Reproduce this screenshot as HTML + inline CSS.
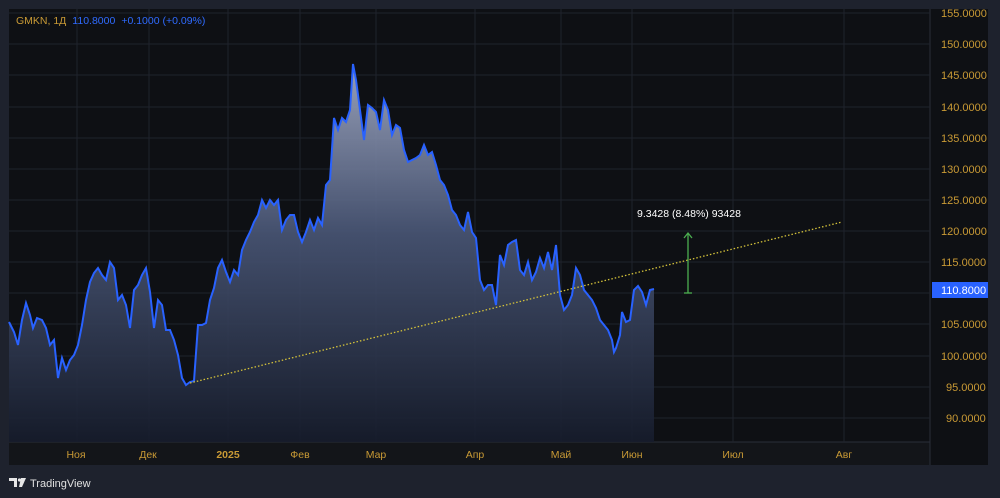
<!DOCTYPE html>
<html><head><meta charset="utf-8"><style>
body{margin:0;width:1000px;height:498px;background:#1e222d;overflow:hidden;font-family:"Liberation Sans",sans-serif}
</style></head><body>
<svg width="1000" height="498" xmlns="http://www.w3.org/2000/svg" style="position:absolute;left:0;top:0">
<defs>
<linearGradient id="g" x1="0" y1="60" x2="0" y2="442" gradientUnits="userSpaceOnUse">
<stop offset="0" stop-color="#a8b1cc"/>
<stop offset="0.45" stop-color="#4a5777"/>
<stop offset="1" stop-color="#161c2c"/>
</linearGradient>
</defs>
<rect x="9" y="9" width="979" height="456" fill="#0e1014"/>
<rect x="9" y="442" width="921" height="23" fill="#131519"/>
<line x1="9" y1="442" x2="930" y2="442" stroke="#2a2e39"/>
<line x1="930" y1="9" x2="930" y2="465" stroke="#2a2e39"/>
<g stroke="#1f232c" stroke-width="1">
<line x1="9" y1="13" x2="930" y2="13"/><line x1="9" y1="44" x2="930" y2="44"/><line x1="9" y1="75" x2="930" y2="75"/><line x1="9" y1="107" x2="930" y2="107"/><line x1="9" y1="138" x2="930" y2="138"/><line x1="9" y1="169" x2="930" y2="169"/><line x1="9" y1="200" x2="930" y2="200"/><line x1="9" y1="231" x2="930" y2="231"/><line x1="9" y1="262" x2="930" y2="262"/><line x1="9" y1="293" x2="930" y2="293"/><line x1="9" y1="324" x2="930" y2="324"/><line x1="9" y1="356" x2="930" y2="356"/><line x1="9" y1="387" x2="930" y2="387"/><line x1="9" y1="418" x2="930" y2="418"/>
<line x1="77" y1="9" x2="77" y2="442"/><line x1="149" y1="9" x2="149" y2="442"/><line x1="228" y1="9" x2="228" y2="442"/><line x1="300" y1="9" x2="300" y2="442"/><line x1="376" y1="9" x2="376" y2="442"/><line x1="475" y1="9" x2="475" y2="442"/><line x1="561" y1="9" x2="561" y2="442"/><line x1="632" y1="9" x2="632" y2="442"/><line x1="733" y1="9" x2="733" y2="442"/><line x1="844" y1="9" x2="844" y2="442"/>
</g>
<path id="p" d="M9,322 L14,332 18,345 22,320 26,303 30,315 33,328 37,318 42,320 46,328 50,345 54,340 58,378 62,358 66,370 70,360 74,355 78,345 82,325 86,300 90,282 94,273 98,268 102,275 106,280 110,262 114,268 118,300 122,295 126,305 130,328 134,290 138,285 142,275 146,268 150,292 154,328 158,300 162,305 166,330 170,330 174,340 178,355 182,378 186,385 190,382 194,381 198,325 202,325 206,323 210,300 214,288 218,268 222,260 226,272 230,282 234,270 238,275 242,250 246,240 250,232 254,222 258,215 262,200 266,208 270,200 274,205 278,200 282,230 286,220 290,215 294,215 298,232 302,242 306,232 310,220 314,230 318,218 322,225 326,185 330,180 334,118 338,130 342,118 346,122 350,110 353,64 356,80 360,110 364,140 368,105 372,108 376,112 380,130 384,100 388,110 392,135 396,125 400,128 404,150 408,162 412,160 416,158 420,155 424,145 428,155 432,152 436,165 440,180 444,185 448,195 452,210 456,215 460,225 464,230 468,212 472,232 476,238 480,280 484,290 488,285 492,285 496,305 500,255 504,265 508,245 512,242 516,240 520,270 524,275 528,262 532,280 536,272 540,258 544,268 548,252 552,270 556,245 560,295 564,310 568,305 572,295 576,268 580,275 584,290 588,295 592,300 596,308 600,320 604,325 608,330 612,340 614,352 616,348 620,335 622,312 626,322 630,320 634,290 638,286 642,292 646,305 650,290 654,289" fill="none"/>
<path d="M9,322 L14,332 18,345 22,320 26,303 30,315 33,328 37,318 42,320 46,328 50,345 54,340 58,378 62,358 66,370 70,360 74,355 78,345 82,325 86,300 90,282 94,273 98,268 102,275 106,280 110,262 114,268 118,300 122,295 126,305 130,328 134,290 138,285 142,275 146,268 150,292 154,328 158,300 162,305 166,330 170,330 174,340 178,355 182,378 186,385 190,382 194,381 198,325 202,325 206,323 210,300 214,288 218,268 222,260 226,272 230,282 234,270 238,275 242,250 246,240 250,232 254,222 258,215 262,200 266,208 270,200 274,205 278,200 282,230 286,220 290,215 294,215 298,232 302,242 306,232 310,220 314,230 318,218 322,225 326,185 330,180 334,118 338,130 342,118 346,122 350,110 353,64 356,80 360,110 364,140 368,105 372,108 376,112 380,130 384,100 388,110 392,135 396,125 400,128 404,150 408,162 412,160 416,158 420,155 424,145 428,155 432,152 436,165 440,180 444,185 448,195 452,210 456,215 460,225 464,230 468,212 472,232 476,238 480,280 484,290 488,285 492,285 496,305 500,255 504,265 508,245 512,242 516,240 520,270 524,275 528,262 532,280 536,272 540,258 544,268 548,252 552,270 556,245 560,295 564,310 568,305 572,295 576,268 580,275 584,290 588,295 592,300 596,308 600,320 604,325 608,330 612,340 614,352 616,348 620,335 622,312 626,322 630,320 634,290 638,286 642,292 646,305 650,290 654,289 L654,442 L9,442 Z" fill="url(#g)" opacity="0.9"/>
<use href="#p" stroke="#2962ff" stroke-width="2"/>
<line x1="190" y1="383" x2="842" y2="222" stroke="#d4c23a" stroke-width="1.3" stroke-dasharray="1.5,2"/>
<line x1="688" y1="293" x2="688" y2="234" stroke="#4caf50" stroke-width="1.3"/>
<line x1="684" y1="293" x2="692" y2="293" stroke="#4caf50" stroke-width="1.3"/>
<path d="M684,238 L688,233 L692,238" stroke="#4caf50" stroke-width="1.3" fill="none"/>
<text x="637" y="217" fill="#ffffff" font-size="10.5">9.3428 (8.48%) 93428</text>
<g fill="#c99a35" font-size="11">
<text x="941" y="17">155.0000</text><text x="941" y="48">150.0000</text><text x="941" y="79">145.0000</text><text x="941" y="111">140.0000</text><text x="941" y="142">135.0000</text><text x="941" y="173">130.0000</text><text x="941" y="204">125.0000</text><text x="941" y="235">120.0000</text><text x="941" y="266">115.0000</text><text x="941" y="328">105.0000</text><text x="941" y="360">100.0000</text><text x="946" y="391">95.0000</text><text x="946" y="422">90.0000</text>
</g>
<rect x="932" y="282" width="56" height="16" fill="#2962ff"/>
<text x="941" y="294" fill="#fff" font-size="11">110.8000</text>
<g fill="#c99a35" font-size="10.5" text-anchor="middle">
<text x="76" y="458">Ноя</text><text x="148" y="458">Дек</text><text x="228" y="458" font-weight="bold">2025</text><text x="300" y="458">Фев</text><text x="376" y="458">Мар</text><text x="475" y="458">Апр</text><text x="561" y="458">Май</text><text x="632" y="458">Июн</text><text x="733" y="458">Июл</text><text x="844" y="458">Авг</text>
</g>
<text x="16" y="24" font-size="10.5"><tspan fill="#c99a35">GMKN, 1Д</tspan><tspan fill="#2f6bff" dx="6">110.8000</tspan><tspan fill="#2f6bff" dx="6">+0.1000 (+0.09%)</tspan></text>
<g fill="#e6e6e6">
<path d="M9,478 h8 v9 h-3 v-6 h-5z"/><circle cx="19.5" cy="480" r="1.6"/><path d="M21,478 h5 l-4,9 h-3z"/>
</g>
<text x="30" y="487" fill="#e0e0e0" font-size="11">TradingView</text>
</svg>
</body></html>
